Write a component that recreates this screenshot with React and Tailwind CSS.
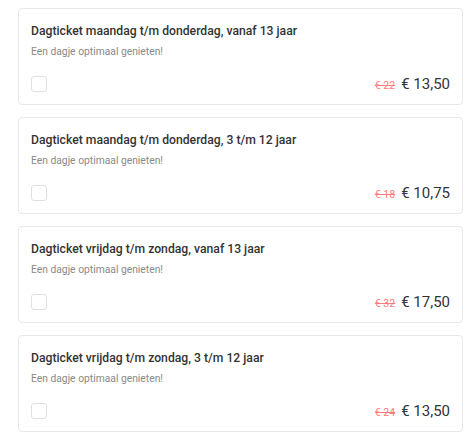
const tickets = [
  { title: "Dagticket maandag t/m donderdag, vanaf 13 jaar", oldPrice: "€ 22", price: "€ 13,50" },
  { title: "Dagticket maandag t/m donderdag, 3 t/m 12 jaar", oldPrice: "€ 18", price: "€ 10,75" },
  { title: "Dagticket vrijdag t/m zondag, vanaf 13 jaar", oldPrice: "€ 32", price: "€ 17,50" },
  { title: "Dagticket vrijdag t/m zondag, 3 t/m 12 jaar", oldPrice: "€ 24", price: "€ 13,50" },
];

function TicketCard({ ticket }) {
  return (
    <div className="bg-white border border-[#e8e8e8] rounded-[4px] px-3 pt-3 pb-3">
      <h3 className="text-[12.2px] leading-5 font-medium text-[#333]">{ticket.title}</h3>
      <p className="text-[10.3px] leading-4 mt-[3px] text-[#8a8a8a]">Een dagje optimaal genieten!</p>
      <div className="flex items-center justify-between mt-4 h-4">
        <span className="w-4 h-4 rounded-[3px] border border-[#e0e0e0] bg-white" />
        <div className="flex items-baseline gap-[6px]">
          <span className="text-[10.5px] text-[#ff7b7b] line-through">{ticket.oldPrice}</span>
          <span className="text-[15px] text-[#333]">{ticket.price}</span>
        </div>
      </div>
    </div>
  );
}

export default function App() {
  return (
    <div className="min-h-screen bg-white pl-[18px] pr-3 pt-2 flex flex-col gap-3 font-['Roboto',sans-serif]">
      {tickets.map((t) => (
        <TicketCard key={t.title} ticket={t} />
      ))}
    </div>
  );
}
